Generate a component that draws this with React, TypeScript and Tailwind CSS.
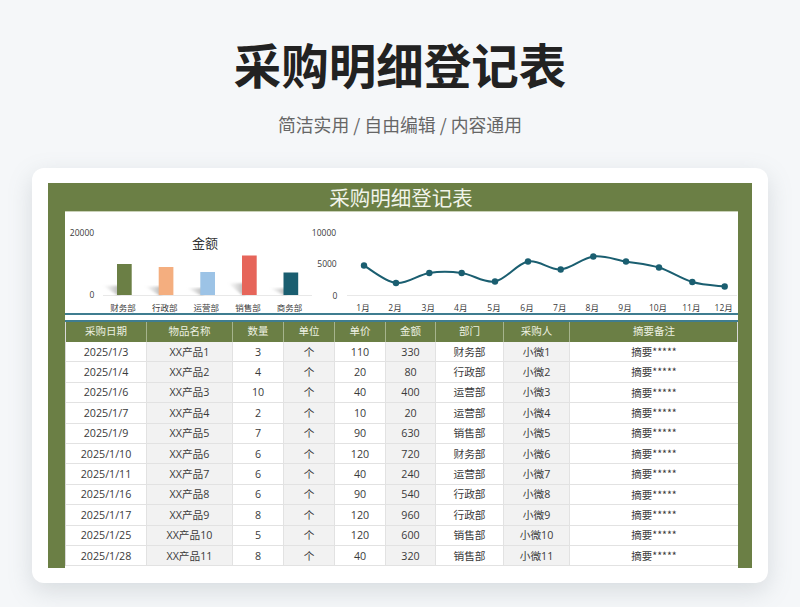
const COLS = "grid grid-cols-[81px_86px_51px_51px_51px_50px_68px_66px_168px]";
const HEAD = ["采购日期", "物品名称", "数量", "单位", "单价", "金额", "部门", "采购人", "摘要备注"];
const ROWS = [
  ["2025/1/3", "XX产品1", "3", "个", "110", "330", "财务部", "小微1"],
  ["2025/1/4", "XX产品2", "4", "个", "20", "80", "行政部", "小微2"],
  ["2025/1/6", "XX产品3", "10", "个", "40", "400", "运营部", "小微3"],
  ["2025/1/7", "XX产品4", "2", "个", "10", "20", "运营部", "小微4"],
  ["2025/1/9", "XX产品5", "7", "个", "90", "630", "销售部", "小微5"],
  ["2025/1/10", "XX产品6", "6", "个", "120", "720", "财务部", "小微6"],
  ["2025/1/11", "XX产品7", "6", "个", "40", "240", "运营部", "小微7"],
  ["2025/1/16", "XX产品8", "6", "个", "90", "540", "行政部", "小微8"],
  ["2025/1/17", "XX产品9", "8", "个", "120", "960", "行政部", "小微9"],
  ["2025/1/25", "XX产品10", "5", "个", "120", "600", "销售部", "小微10"],
  ["2025/1/28", "XX产品11", "8", "个", "40", "320", "销售部", "小微11"],
];
const SHADED = [false, true, false, true, false, true, false, true, false];
const CJK = "[font-family:'Noto_Sans_CJK_SC','Noto_Sans',sans-serif]";
const MIXED = "[font-family:'Open_Sans','Noto_Sans_CJK_SC',sans-serif]";

const BARS = [
  { x: 52, top: 53, fill: "#6b7f45", name: "财务部" },
  { x: 93.7, top: 56, fill: "#f4ae7f", name: "行政部" },
  { x: 135.3, top: 61, fill: "#9cc3e6", name: "运营部" },
  { x: 177, top: 44.5, fill: "#e6655a", name: "销售部" },
  { x: 218.5, top: 61.5, fill: "#1a5e70", name: "商务部" },
];
const PTS: [number, number][] = [
  [299, 54.5], [331, 72], [364.3, 62], [396.7, 62], [430, 70.5], [463, 50.5],
  [495.7, 58.5], [528.3, 45.5], [561, 50.5], [594, 56.5], [627.3, 71], [659.7, 75.5],
];
function smooth(p: [number, number][]) {
  let d = `M${p[0][0]} ${p[0][1]}`;
  for (let i = 0; i < p.length - 1; i++) {
    const a = p[Math.max(i - 1, 0)], b = p[i], c = p[i + 1], e = p[Math.min(i + 2, p.length - 1)];
    const t = 0.17;
    d += ` C${b[0] + (c[0] - a[0]) * t} ${b[1] + (c[1] - a[1]) * t} ${c[0] - (e[0] - b[0]) * t} ${c[1] - (e[1] - b[1]) * t} ${c[0]} ${c[1]}`;
  }
  return d;
}

function Charts() {
  return (
    <svg viewBox="0 1 672 101" className="block w-[672px] h-[101px]" fontFamily="'Open Sans','Noto Sans CJK SC',sans-serif">
      <defs>
        <linearGradient id="sh" x1="1" y1="0" x2="0" y2="0">
          <stop offset="0" stopColor="#9a9a9a" stopOpacity="0.75" />
          <stop offset="1" stopColor="#bdbdbd" stopOpacity="0" />
        </linearGradient>
        <filter id="bl"><feGaussianBlur stdDeviation="1" /></filter>
      </defs>
      <text x="17" y="25" fontSize="8.5" fill="#3a3a3a" textAnchor="middle">20000</text>
      <text x="27" y="87" fontSize="8.5" fill="#3a3a3a" textAnchor="middle">0</text>
      <text x="140" y="36.5" fontSize="13" fill="#333" textAnchor="middle">金额</text>
      <line x1="38" x2="247" y1="84.5" y2="84.5" stroke="#e8e8e8" />
      {BARS.map((b) => (
        <g key={b.name}>
          <polygon points={`${b.x},84 ${b.x + 3},84 ${b.x + 3},${84 - (84 - b.top) * 0.3} ${b.x - 14},${84 - (84 - b.top) * 0.3}`} fill="url(#sh)" filter="url(#bl)" />
          <rect x={b.x} y={b.top} width="14.7" height={84 - b.top} fill={b.fill} />
          <text x={b.x + 6} y="100" fontSize="8.5" fill="#3a3a3a" textAnchor="middle">{b.name}</text>
        </g>
      ))}
      <text x="259" y="25" fontSize="8.5" fill="#3a3a3a" textAnchor="middle">10000</text>
      <text x="262" y="56" fontSize="8.5" fill="#3a3a3a" textAnchor="middle">5000</text>
      <text x="270" y="87.5" fontSize="8.5" fill="#3a3a3a" textAnchor="middle">0</text>
      <line x1="282" x2="676" y1="84.5" y2="84.5" stroke="#e8e8e8" />
      <path d={smooth(PTS)} fill="none" stroke="#1a5e70" strokeWidth="2" strokeLinecap="round" />
      {PTS.map((p, i) => (
        <g key={i}>
          <circle cx={p[0]} cy={p[1]} r="3.2" fill="#1a5e70" />
          <text x={p[0] - 1} y="100" fontSize="8.5" fill="#3a3a3a" textAnchor="middle">{i + 1}月</text>
        </g>
      ))}
    </svg>
  );
}

export default function App() {
  return (
    <div className={`h-[607px] w-[800px] overflow-hidden bg-[#f5f7f9] flex flex-col items-center ${CJK}`}>
      <h1 className="mt-[29px] h-[70px] text-[47.5px] leading-[70px] font-bold text-[#222222]">采购明细登记表</h1>
      <p className="mt-[14px] h-[22px] text-[17.85px] leading-[22px] text-[#666666]">简洁实用 / 自由编辑 / 内容通用</p>
      <div className="mt-[33px] w-[736px] h-[415px] rounded-xl bg-white pt-[15px] px-4 shadow-[0_8px_24px_rgba(110,125,130,0.22)]">
        <div className="h-[385px] w-[704px] bg-[#6b7f45] px-[17px] flex flex-col overflow-hidden">
          <div className="h-[28px] shrink-0 pl-[2px] text-center text-[20.5px] leading-[29px] text-[#f1f4ea]">采购明细登记表</div>
          <div className="flex-1 bg-white border-t border-[#c9d1b8] w-[673px]">
            <div className="h-[101px]"><Charts /></div>
            <div className="h-[9px] border-y-2 border-[#3f7d90]" />
            <div className="border-x border-[#d9d9d9]">
              <div className={`${COLS} h-[20px] bg-[#6b7f45] text-[10.5px] text-[#edf1e2]`}>
                {HEAD.map((h) => (
                  <div key={h} className="flex items-center justify-center pb-[2px] border-r border-[#a6b48d] last:border-r-0">{h}</div>
                ))}
              </div>
              {ROWS.map((r) => (
                <div key={r[0]} className={`${COLS} h-[20.4px] text-[10.7px] text-[#3a3a3a] ${MIXED}`}>
                  {r.map((c, i) => (
                    <div key={i} className={`flex items-center justify-center border-r border-b border-[#e2e2e2] ${SHADED[i] ? "bg-[#f2f2f2]" : "bg-white"}`}>{c}</div>
                  ))}
                  <div className={`flex items-center justify-center border-b border-[#e2e2e2] bg-white text-[10.5px] ${CJK}`}>摘要*****</div>
                </div>
              ))}
            </div>
          </div>
        </div>
      </div>
    </div>
  );
}
